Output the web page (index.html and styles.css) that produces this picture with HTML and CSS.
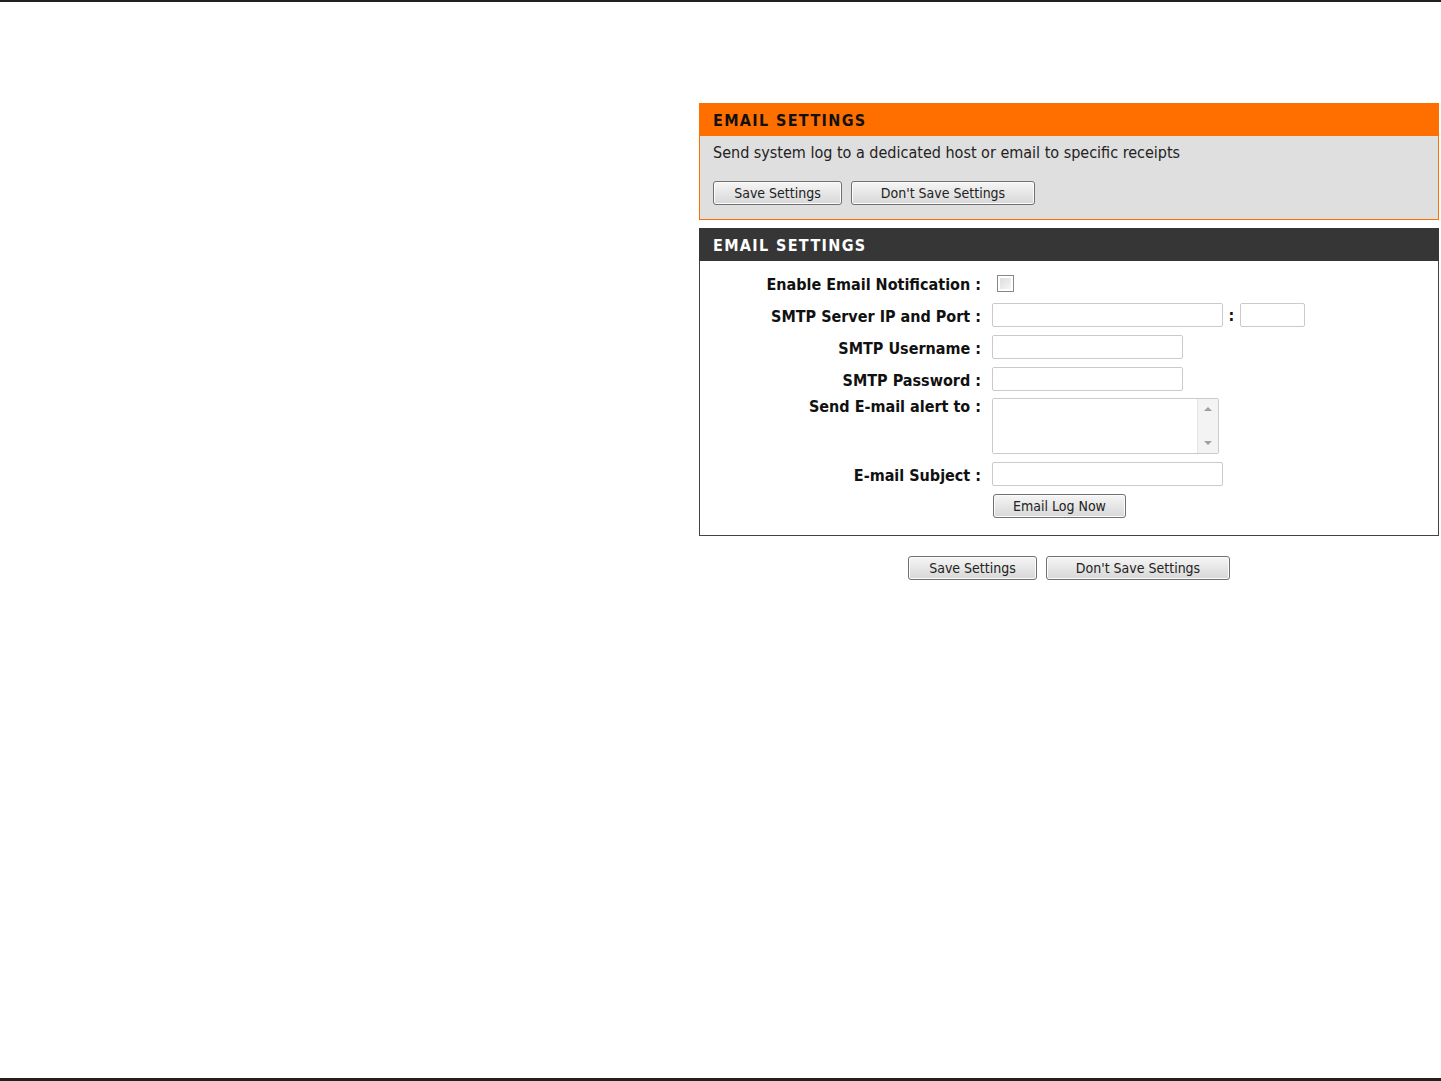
FILE: index.html
```html
<!DOCTYPE html>
<html lang="en">
<head>
    <meta charset="UTF-8">
    <title>Email Settings</title>
    <link rel="stylesheet" href="styles.css">
</head>
<body>
    <div class="page">
        <div class="side"></div>
        <div class="main">
            <div class="box intro">
                <h2 class="box-title">EMAIL SETTINGS</h2>
                <div class="intro-body">
                    <p>Send system log to a dedicated host or email to specific receipts</p>
                    <div class="button-row">
                        <button class="btn btn-save">Save Settings</button>
                        <button class="btn btn-nosave">Don't Save Settings</button>
                    </div>
                </div>
            </div>

            <div class="box settings">
                <h2 class="box-title">EMAIL SETTINGS</h2>
                <div class="form">
                    <label class="label">Enable Email Notification :</label>
                    <div class="field"><input type="checkbox" class="check"></div>

                    <label class="label">SMTP Server IP and Port :</label>
                    <div class="field">
                        <input type="text" class="text text-ip">
                        <span class="colon">:</span>
                        <input type="text" class="text text-port">
                    </div>

                    <label class="label">SMTP Username :</label>
                    <div class="field"><input type="text" class="text text-short"></div>

                    <label class="label">SMTP Password :</label>
                    <div class="field"><input type="password" class="text text-short"></div>

                    <label class="label label-top">Send E-mail alert to :</label>
                    <div class="field">
                        <div class="area">
                            <textarea></textarea>
                            <div class="scroll">
                                <span class="arrow up"></span>
                                <span class="arrow down"></span>
                            </div>
                        </div>
                    </div>

                    <label class="label">E-mail Subject :</label>
                    <div class="field"><input type="text" class="text text-ip"></div>

                    <div></div>
                    <div class="field"><button class="btn btn-log">Email Log Now</button></div>
                </div>
            </div>

            <div class="button-row bottom-row">
                <button class="btn btn-save">Save Settings</button>
                <button class="btn btn-nosave">Don't Save Settings</button>
            </div>
        </div>
    </div>
</body>
</html>
```

FILE: styles.css
```css
body {
    margin: 0;
    font-family: "DejaVu Sans Condensed", "DejaVu Sans", sans-serif;
    color: #222;
    background-color: #fff;
    min-height: 1081px;
    border-top: 2px solid #231f20;
    border-bottom: 3px solid #231f20;
    box-sizing: border-box;
}

.page {
    display: flex;
    padding-top: 101px;
}

.side {
    width: 699px;
    flex: none;
}

.main {
    width: 740px;
}

.box {
    box-sizing: border-box;
    width: 740px;
}

.box-title {
    margin: 0;
    height: 33px;
    line-height: 35px;
    padding-left: 14px;
    font-size: 16px;
    font-weight: bold;
    letter-spacing: 1.35px;
}

/* top orange box */
.intro {
    border: 1px solid #ff6f00;
    background-color: #dfdfdf;
}

.intro .box-title {
    background-color: #ff6f00;
    color: #111;
    margin: -1px -1px 0;
}

.intro-body {
    padding: 5px 13px 14px;
}

.intro-body p {
    margin: 0 0 16px;
    font-size: 16px;
    line-height: 24px;
    color: #222;
}

.button-row {
    display: flex;
    gap: 9px;
}

/* buttons */
.btn {
    font-family: inherit;
    font-size: 14px;
    height: 24px;
    padding: 0;
    border: 1px solid #707070;
    border-radius: 3px;
    background: linear-gradient(#f6f6f6, #e6e6e6 50%, #d8d8d8);
    color: #222;
    box-shadow: inset 0 0 0 1px #fcfcfc;
}

.btn-save {
    width: 129px;
}

.btn-nosave {
    width: 184px;
}

.btn-log {
    width: 133px;
    margin-left: 1px;
}

/* dark box */
.settings {
    margin-top: 8px;
    border: 1px solid #444;
    background-color: #fff;
}

.settings .box-title {
    background-color: #363636;
    color: #fff;
    margin: -1px -1px 0;
}

.form {
    display: grid;
    grid-template-columns: 281px 1fr;
    column-gap: 11px;
    row-gap: 8px;
    padding: 10px 0 17px;
}

.label {
    text-align: right;
    font-weight: bold;
    font-size: 16px;
    line-height: 21px;
    padding-top: 3px;
    color: #111;
    white-space: nowrap;
}

.label-top {
    padding-top: 0;
    line-height: 16px;
}

.field {
    display: flex;
    align-items: center;
    min-height: 24px;
}

.check {
    margin: 0 0 0 5px;
    width: 17px;
    height: 17px;
    appearance: none;
    border: 1px solid #888;
    background: linear-gradient(135deg, #d8d8d8, #fafafa);
    box-shadow: inset 0 0 0 2px #fff;
}

.text {
    box-sizing: border-box;
    height: 24px;
    border: 1px solid #c9c9cf;
    border-radius: 2px;
    margin: 0;
    padding: 0 3px;
    background-color: #fff;
}

.text-ip {
    width: 231px;
}

.text-short {
    width: 191px;
}

.text-port {
    width: 65px;
}

.colon {
    width: 17px;
    text-align: center;
    font-weight: bold;
    font-size: 16px;
    color: #111;
}

.area {
    display: flex;
    box-sizing: border-box;
    width: 227px;
    height: 56px;
    margin-top: -1px;
    border: 1px solid #c9c9cf;
    border-radius: 2px;
}

.area textarea {
    flex: 1;
    border: none;
    resize: none;
    margin: 0;
    padding: 2px;
    outline: none;
}

.scroll {
    width: 20px;
    background-color: #f3f3f3;
    border-left: 1px solid #e6e6e6;
    display: flex;
    flex-direction: column;
    justify-content: space-between;
    align-items: center;
    padding: 8px 0;
}

.arrow {
    width: 0;
    height: 0;
    border-left: 4px solid transparent;
    border-right: 4px solid transparent;
}

.arrow.up {
    border-bottom: 4px solid #a0a0a0;
}

.arrow.down {
    border-top: 4px solid #a0a0a0;
}

.bottom-row {
    justify-content: center;
    margin-top: 20px;
}
```
